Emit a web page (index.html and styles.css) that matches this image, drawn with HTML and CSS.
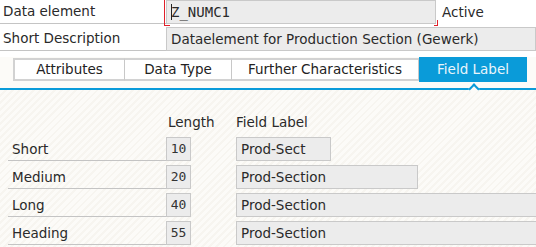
FILE: index.html
```html
<!DOCTYPE html>
<html lang="en">
<head>
    <meta charset="UTF-8">
    <title>Data element Z_NUMC1</title>
    <link rel="stylesheet" href="styles.css">
</head>
<body>
    <div class="head">
        <div class="row">
            <div class="label">Data element</div>
            <div class="focus">
                <div class="field mono field-name"><span class="caret"></span>Z_NUMC1</div>
            </div>
            <div class="status">Active</div>
        </div>
        <div class="row">
            <div class="label">Short Description</div>
            <div class="field field-wide">Dataelement for Production Section (Gewerk)</div>
        </div>
    </div>

    <nav class="tabs">
        <a class="tab tab-attr">Attributes</a>
        <a class="tab tab-type">Data Type</a>
        <a class="tab tab-char">Further Characteristics</a>
        <a class="tab tab-label active">Field Label</a>
    </nav>
    <div class="tabline"><span class="notch"></span></div>

    <section class="labels">
        <div class="lrow lhead">
            <div class="lname"></div>
            <div class="lcol">Length</div>
            <div>Field Label</div>
        </div>
        <div class="lrow">
            <div class="lname">Short</div>
            <div class="lcol"><span class="box mono len">10</span></div>
            <div class="box text w-short">Prod-Sect</div>
        </div>
        <div class="lrow">
            <div class="lname">Medium</div>
            <div class="lcol"><span class="box mono len">20</span></div>
            <div class="box text w-medium">Prod-Section</div>
        </div>
        <div class="lrow">
            <div class="lname">Long</div>
            <div class="lcol"><span class="box mono len">40</span></div>
            <div class="box text w-long">Prod-Section</div>
        </div>
        <div class="lrow">
            <div class="lname">Heading</div>
            <div class="lcol"><span class="box mono len">55</span></div>
            <div class="box text w-long">Prod-Section</div>
        </div>
    </section>
</body>
</html>
```

FILE: styles.css
```css
body {
    margin: 0;
    width: 536px;
    height: 247px;
    overflow: hidden;
    font-family: "DejaVu Sans", Verdana, sans-serif;
    font-size: 13.5px;
    color: #2a2a2a;
    background: #fcfbf8;
}
.mono {
    font-family: "DejaVu Sans Mono", "Liberation Mono", monospace;
}
.head {
    background: #fff;
    padding-bottom: 3px;
}
.row {
    display: flex;
    height: 24px;
    margin-bottom: 3px;
}
.label {
    width: 163px;
    flex-shrink: 0;
    padding-left: 3px;
    line-height: 23px;
    border-bottom: 1px solid #c4c4c4;
}
.field {
    box-sizing: border-box;
    height: 24px;
    line-height: 22px;
    background: #ececec;
    border: 1px solid #c9c9c9;
    padding-left: 4px;
    white-space: nowrap;
    overflow: hidden;
}
.focus {
    position: relative;
    width: 270px;
    height: 24px;
    flex-shrink: 0;
}
.focus::before {
    content: "";
    position: absolute;
    left: -2px;
    top: 0;
    width: 6px;
    height: 26px;
    border-left: 1px solid #e0202a;
    border-bottom: 1px solid #e0202a;
    box-sizing: border-box;
}
.focus::after {
    content: "";
    position: absolute;
    right: -2px;
    top: 20px;
    width: 4px;
    height: 6px;
    border-right: 1px solid #e0202a;
    border-bottom: 1px solid #e0202a;
    box-sizing: border-box;
}
.field-name {
    width: 270px;
    font-size: 14px;
}
.caret {
    display: inline-block;
    width: 1px;
    height: 16px;
    background: #222;
    vertical-align: -3px;
    margin-right: -1px;
}
.status {
    padding-left: 6px;
    line-height: 24px;
}
.field-wide {
    flex: 1;
}

.tabs {
    display: flex;
    margin-left: 13px;
    height: 25px;
    align-items: center;
}
.tab {
    box-sizing: border-box;
    flex-shrink: 0;
    height: 23px;
    line-height: 19px;
    text-align: center;
    background: #fff;
    border-top: 2px solid #d2d2d2;
    border-bottom: 2px solid #d2d2d2;
    border-right: 1px solid #c8c8c8;
    color: #222;
    white-space: nowrap;
}
.tab-attr { width: 112px; border-left: 2px solid #d2d2d2; }
.tab-type { width: 107px; }
.tab-char { width: 187px; }
.tab-label { width: 108px; }
.tab.active {
    height: 25px;
    line-height: 25px;
    background: #0a9bd9;
    border: none;
    color: #e9f5fb;
}
.tabline {
    position: relative;
    margin-top: 6px;
    height: 2px;
    background: #0a9bd9;
}
.notch {
    position: absolute;
    left: 470px;
    top: -3px;
    width: 6px;
    height: 6px;
    background: #fcfbf8;
    border-top: 2px solid #0a9bd9;
    border-left: 2px solid #0a9bd9;
    transform: rotate(45deg);
}

.labels {
    padding-top: 22px;
    background: repeating-linear-gradient(135deg, #fcfbf8 0 3px, #f7f5f0 3px 5px);
    height: 135px;
    overflow: hidden;
}
.lrow {
    display: flex;
    align-items: center;
    height: 24px;
    margin-bottom: 4px;
}
.lhead {
    height: 20px;
    margin-bottom: 5px;
}
.lname {
    box-sizing: border-box;
    flex-shrink: 0;
    margin-left: 8px;
    width: 158px;
    height: 24px;
    line-height: 24px;
    padding-left: 4px;
    border-bottom: 1px solid #c4c4c4;
}
.lhead .lname {
    border: none;
    height: 20px;
}
.lcol {
    flex-shrink: 0;
    width: 70px;
    box-sizing: border-box;
}
.lhead .lcol {
    padding-left: 2px;
}
.box {
    display: block;
    box-sizing: border-box;
    flex-shrink: 0;
    height: 24px;
    line-height: 22px;
    background: #ececec;
    border: 1px solid #c9c9c9;
    white-space: nowrap;
}
.len {
    width: 25px;
    text-align: center;
    font-size: 13px;
    color: #333;
}
.text {
    padding-left: 4px;
}
.w-short { width: 95px; }
.w-medium { width: 182px; }
.w-long { width: 320px; }
```
